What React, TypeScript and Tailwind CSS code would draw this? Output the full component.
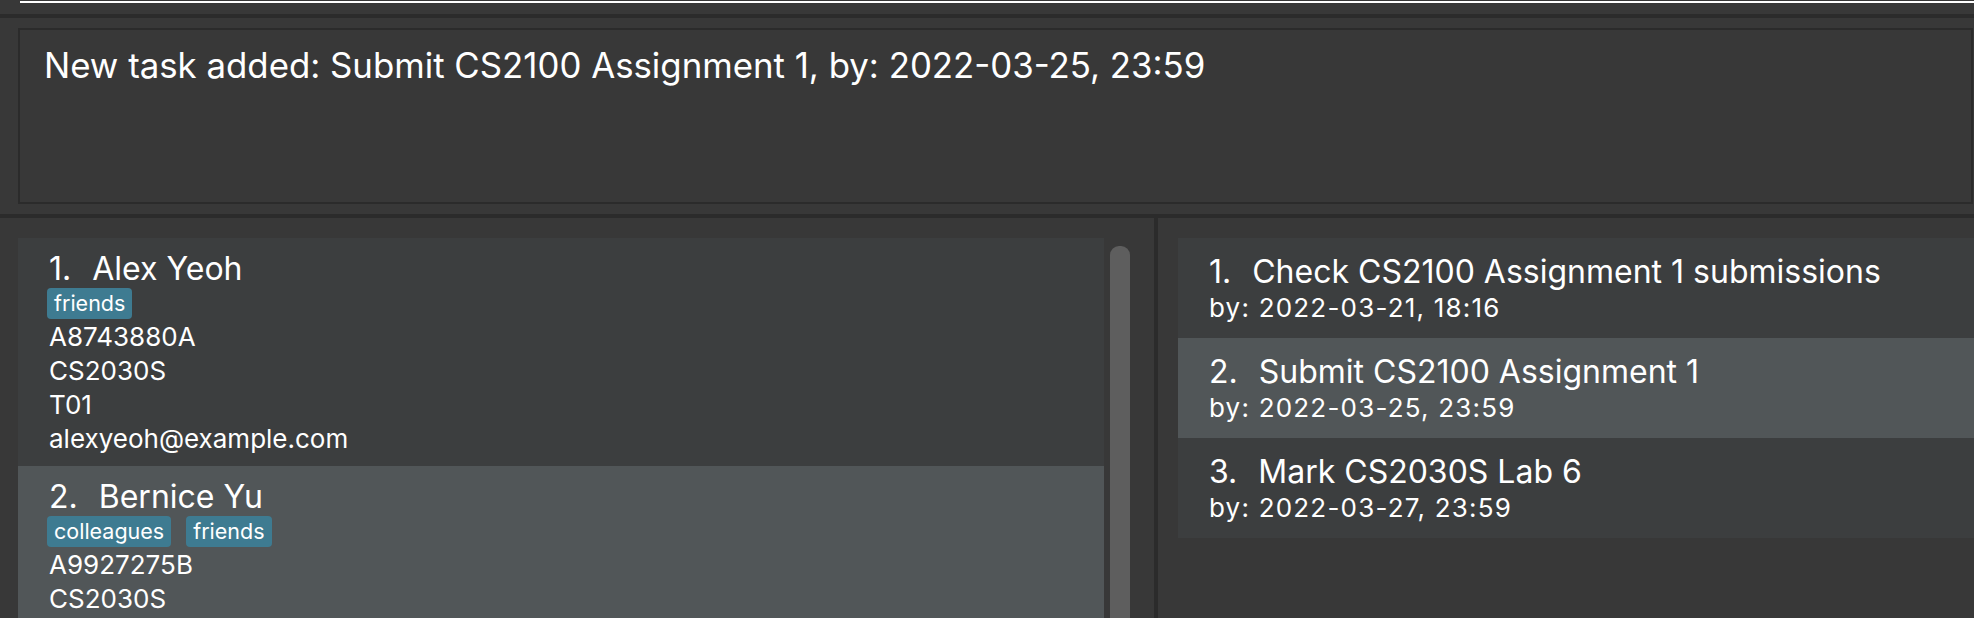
import { FC } from "react";

type Person = {
  name: string;
  tags: string[];
  details: string[];
};

type Task = {
  name: string;
  by: string;
};

const persons: Person[] = [
  {
    name: "Alex Yeoh",
    tags: ["friends"],
    details: ["A8743880A", "CS2030S", "T01", "alexyeoh@example.com"],
  },
  {
    name: "Bernice Yu",
    tags: ["colleagues", "friends"],
    details: ["A9927275B", "CS2030S", "T02", "berniceyu@example.com"],
  },
];

const tasks: Task[] = [
  { name: "Check CS2100 Assignment 1 submissions", by: "2022-03-21, 18:16" },
  { name: "Submit CS2100 Assignment 1", by: "2022-03-25, 23:59" },
  { name: "Mark CS2030S Lab 6", by: "2022-03-27, 23:59" },
];

const rowColor = (idx: number) => (idx % 2 === 0 ? "bg-[#3c3e3f]" : "bg-[#515658]");

const PersonCard: FC<Person & { index: number }> = (props): JSX.Element => {
  return (
    <div className={`${rowColor(props.index)} h-[228px] shrink-0 pl-[31px] pt-[12px]`}>
      <div className="flex text-[32px] leading-[38px]">
        <span>{props.index + 1}.</span>
        <span className="ml-[21px]">{props.name}</span>
      </div>
      <div className="-ml-[2px] flex gap-[15px]">
        {props.tags.map((tag, idx) => {
          return (
            <span
              key={idx}
              className="h-[31px] rounded-[4px] bg-[#3e7b91] pl-[7px] pr-[7px] text-[21.5px] leading-[31px]"
            >
              {tag}
            </span>
          );
        })}
      </div>
      <div className="mt-[1px] text-[26px] leading-[34px]">
        {props.details.map((line, idx) => {
          return <div key={idx}>{line}</div>;
        })}
      </div>
    </div>
  );
};

const TaskCard: FC<Task & { index: number }> = (props): JSX.Element => {
  return (
    <div className={`${rowColor(props.index)} h-[100px] shrink-0 pl-[31px] pt-[15px]`}>
      <div className="flex whitespace-nowrap text-[32px] leading-[38px]">
        <span>{props.index + 1}.</span>
        <span className="ml-[21px]">{props.name}</span>
      </div>
      <div className="whitespace-nowrap text-[26px] leading-[34px] tracking-[1.2px]">by: {props.by}</div>
    </div>
  );
};

export default function App() {
  return (
    <div
      className="flex h-[618px] w-[1974px] flex-col overflow-hidden bg-[#383838] text-white"
      style={{ fontFamily: "Inter, 'Noto Sans', sans-serif" }}
    >
      <div className="h-[14px] shrink-0 pt-[1px] pl-[20px]">
        <div className="h-[2px] bg-white" />
      </div>
      <div className="h-[4px] shrink-0 bg-[#2b2b2b]" />
      <div className="h-[196px] shrink-0 pt-[10px] pl-[18px]">
        <div className="h-[176px] w-[1955px] border-2 border-[#2b2b2b] pt-[15px] pl-[24px] text-[34.8px] leading-[41px]">
          New task added: Submit CS2100 Assignment 1, by: 2022-03-25, 23:59
        </div>
      </div>
      <div className="h-[4px] shrink-0 bg-[#2b2b2b]" />
      <div className="flex min-h-0 flex-1">
        <div className="flex w-[1154px] shrink-0 pt-[20px] pl-[18px]">
          <div className="flex w-[1086px] flex-col overflow-hidden">
            {persons.map((p, idx) => {
              return <PersonCard key={idx} index={idx} {...p} />;
            })}
          </div>
          <div className="ml-[6px] pt-[8px]">
            <div className="h-full w-[20px] rounded-t-[9px] bg-[#5e5e5e]" />
          </div>
        </div>
        <div className="w-[4px] shrink-0 bg-[#2b2b2b]" />
        <div className="flex flex-1 flex-col overflow-hidden pt-[20px] pl-[20px]">
          {tasks.map((t, idx) => {
            return <TaskCard key={idx} index={idx} {...t} />;
          })}
        </div>
      </div>
    </div>
  );
}
